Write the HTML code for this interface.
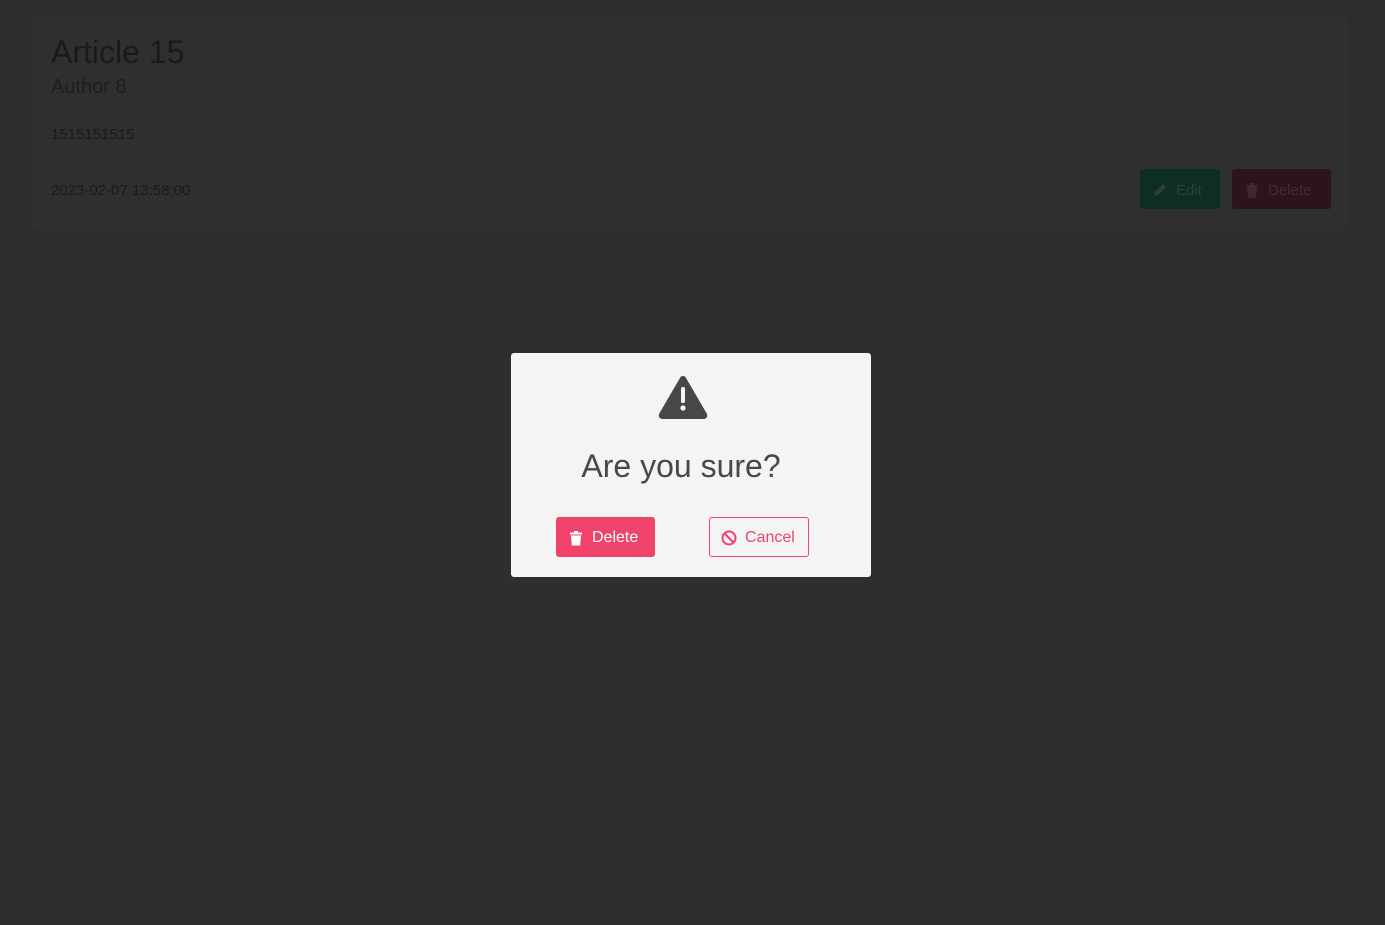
<!DOCTYPE html>
<html><head><meta charset="utf-8"><style>
html,body{margin:0;padding:0;width:1385px;height:925px;overflow:hidden;background:#2e2e2e;font-family:"Segoe UI","Liberation Sans",sans-serif}
.card{position:absolute;left:31px;top:14px;width:1318px;height:216px;background:#2f2f2f;border-radius:6px;box-shadow:0 0 4px rgba(0,0,0,0.08)}
.t{position:absolute;color:#1b1b1b;white-space:nowrap}
.btn{position:absolute;border-radius:3px;display:flex;align-items:center;font-size:15px;color:#3a3a3a;padding-top:2px;box-sizing:border-box}
.dlg{position:absolute;left:511px;top:353px;width:360px;height:224px;background:#f4f4f4;border-radius:3px}
</style></head><body>
<div class="card"></div>
<div class="t" style="left:51px;top:34px;font-size:32px;color:#1a1a1a">Article 15</div>
<div class="t" style="left:51px;top:76px;font-size:20px;color:#1e1e1e">Author 8</div>
<div class="t" style="left:51px;top:126px;font-size:15px">1515151515</div>
<div class="t" style="left:51px;top:182px;font-size:15px">2023-02-07 13:58:00</div>
<div class="btn" style="left:1140px;top:169px;width:80px;height:40px;background:#0e2e23">
<svg style="margin-left:12px" width="16" height="16" viewBox="0 0 16 16"><path d="M2 14l1-4 8-8 3 3-8 8z" fill="#2f3f38"/></svg><span style="margin-left:8px;color:#2f3f38">Edit</span></div>
<div class="btn" style="left:1232px;top:169px;width:99px;height:40px;background:#2f131b">
<svg style="margin-left:13px" width="14" height="16" viewBox="0 0 14 16"><path d="M1 3h12v2H1zM5 1h4v2H5zM2 5h10l-1 11H3z" fill="#3b2a2e"/></svg><span style="margin-left:9px;color:#3e2e31">Delete</span></div>
<div class="dlg">
<svg style="position:absolute;left:147px;top:22px" width="50" height="44" viewBox="0 0 50 44"><path d="M25 1c1.2 0 2.2.6 2.8 1.6l21 36c1.2 2.2-.3 5.4-2.8 5.4H4c-2.5 0-4-3.2-2.8-5.4l21-36C22.8 1.6 23.8 1 25 1z" fill="#474747"/><rect x="23" y="12" width="4" height="16" rx="1.5" fill="#f4f4f4"/><circle cx="25" cy="33" r="2.6" fill="#f4f4f4"/></svg>
<div style="position:absolute;left:-10px;width:360px;top:95px;text-align:center;font-size:32px;color:#484848">Are you sure?</div>
<div class="btn" style="left:45px;top:164px;width:99px;height:40px;background:#ef436a;color:#fff;font-size:16px">
<svg style="margin-left:13px" width="14" height="16" viewBox="0 0 14 16"><path d="M1 2.5h12v2H1zM5 1h4v2H5zM2 5.5h10l-.8 10H2.8z" fill="#fff"/></svg><span style="margin-left:9px">Delete</span></div>
<div class="btn" style="left:198px;top:164px;width:100px;height:40px;border:1px solid #ef436a;color:#ef436a;font-size:16px">
<svg style="margin-left:11px" width="16" height="16" viewBox="0 0 16 16"><circle cx="8" cy="8" r="6.5" fill="none" stroke="#ef436a" stroke-width="2"/><path d="M3.5 3.5l9 9" stroke="#ef436a" stroke-width="2"/></svg><span style="margin-left:8px">Cancel</span></div>
</div>
</body></html>
